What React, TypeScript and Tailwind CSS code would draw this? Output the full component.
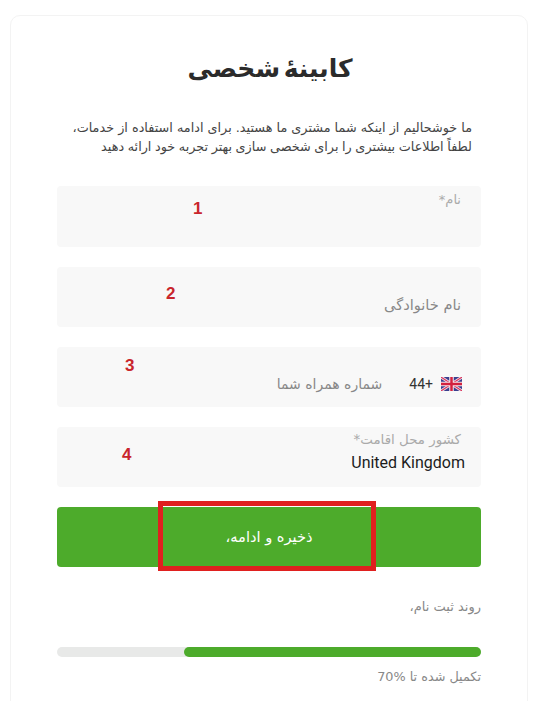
const fa = { fontFamily: '"DejaVu Sans", sans-serif' };
const ro = { fontFamily: 'Roboto, sans-serif' };

function Flag() {
  return (
    <svg width="21" height="14" viewBox="0 0 60 40" className="block">
      <rect width="60" height="40" fill="#3a3f8f" />
      <path d="M0 0L60 40M60 0L0 40" stroke="#f2dfe6" strokeWidth="8" />
      <path d="M0 0L60 40M60 0L0 40" stroke="#d8315b" strokeWidth="3" />
      <path d="M30 0V40M0 20H60" stroke="#f6e6ea" strokeWidth="13" />
      <path d="M30 0V40M0 20H60" stroke="#d3213f" strokeWidth="7" />
    </svg>
  );
}

function Mark({ n, className }: { n: string; className: string }) {
  return (
    <span
      style={{ fontFamily: '"Liberation Sans", sans-serif' }}
      className={`absolute text-[17px] leading-[18px] font-bold text-[#c9252c] ${className}`}
    >
      {n}
    </span>
  );
}

export default function App() {
  return (
    <div dir="rtl" className="h-[701px] overflow-hidden bg-white pt-[15px] pl-[10px] pr-[5px]" style={fa}>
      <div className="relative h-[720px] rounded-t-[10px] border border-[#f3f3f3] px-[46px]">
        <h1 className="mt-[33px] pl-[2px] text-center text-[25px] leading-[40px] font-bold text-[#2b2b2b] [word-spacing:-5px]">کابینهٔ شخصی</h1>

        <p className="mt-[29px] pr-[9px] text-[12.8px] leading-[19px] text-[#444]">
          ما خوشحالیم از اینکه شما مشتری ما هستید. برای ادامه استفاده از خدمات،
          <br />
          <span className="[word-spacing:-0.5px]">لطفاً اطلاعات بیشتری را برای شخصی سازی بهتر تجربه خود ارائه دهید</span>
        </p>

        <div className="mt-[30px] flex flex-col gap-[20px]">
          <div className="h-[61px] rounded-[4px] bg-[#f8f8f8] pr-[20px] pt-[1px]">
            <span className="text-[13px] leading-[18px] text-[#aaa]">نام*</span>
          </div>
          <div className="flex h-[60px] items-end rounded-[4px] bg-[#f8f8f8] pr-[20px] pb-[11px]">
            <span className="text-[14.6px] leading-[22px] text-[#888]">نام خانوادگی</span>
          </div>
          <div className="flex h-[60px] items-end rounded-[4px] bg-[#f8f8f8] pr-[19px] pb-[16px]">
            <Flag />
            <span className="mr-[8px] mb-[-2px] text-[14px] leading-[18px] text-[#333]" style={ro}>+44</span>
            <span className="mr-[27px] mb-[-3px] text-[14px] leading-[20px] text-[#888]">شماره همراه شما</span>
          </div>
          <div className="flex h-[60px] flex-col items-start rounded-[4px] bg-[#f8f8f8] pr-[16px] pt-[4px]">
            <span className="mr-[4px] text-[13.4px] leading-[18px] text-[#aaa]">کشور محل اقامت*</span>
            <span dir="ltr" className="mt-[3px] text-[16px] leading-[22px] text-[#1c1c1c]" style={ro}>United Kingdom</span>
          </div>
          <button className="flex h-[60px] items-center justify-center rounded-[4px] bg-[#4dab2b] text-[14.6px] font-normal text-white" style={fa}>
            ذخیره و ادامه،
          </button>
        </div>

        <p className="mt-[30px] text-[13px] leading-[20px] text-[#888]">روند ثبت نام،</p>

        <div className="mt-[30px] h-[10px] rounded-full bg-[#e8e9e8]">
          <div className="h-full w-[70%] rounded-full bg-[#4dab2b]" />
        </div>

        <p className="mt-[10px] text-[12.8px] leading-[20px] text-[#888]">
          تکمیل شده تا <span dir="ltr">70%</span>
        </p>

        <Mark n="1" className="left-[182px] top-[184px]" />
        <Mark n="2" className="left-[155px] top-[269px]" />
        <Mark n="3" className="left-[114px] top-[341px]" />
        <Mark n="4" className="left-[111px] top-[430px]" />
        <div className="absolute left-[147px] top-[485px] h-[70px] w-[218px] border-[5px] border-[#e0201f]" />
      </div>
    </div>
  );
}
